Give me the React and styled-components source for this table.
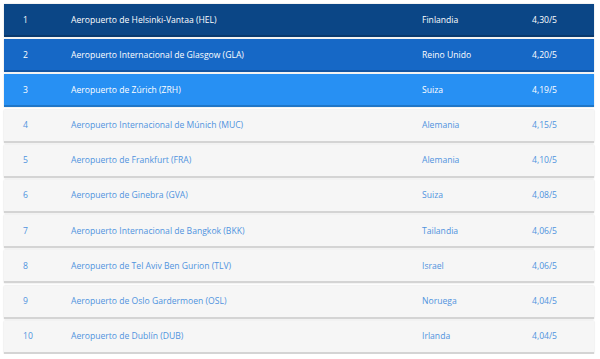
import React from "react";
import styled, { createGlobalStyle } from "styled-components";

const airports = [
  { rank: 1, name: "Aeropuerto de Helsinki-Vantaa (HEL)", country: "Finlandia", score: "4,30/5" },
  { rank: 2, name: "Aeropuerto Internacional de Glasgow (GLA)", country: "Reino Unido", score: "4,20/5" },
  { rank: 3, name: "Aeropuerto de Zúrich (ZRH)", country: "Suiza", score: "4,19/5" },
  { rank: 4, name: "Aeropuerto Internacional de Múnich (MUC)", country: "Alemania", score: "4,15/5" },
  { rank: 5, name: "Aeropuerto de Frankfurt (FRA)", country: "Alemania", score: "4,10/5" },
  { rank: 6, name: "Aeropuerto de Ginebra (GVA)", country: "Suiza", score: "4,08/5" },
  { rank: 7, name: "Aeropuerto Internacional de Bangkok (BKK)", country: "Tailandia", score: "4,06/5" },
  { rank: 8, name: "Aeropuerto de Tel Aviv Ben Gurion (TLV)", country: "Israel", score: "4,06/5" },
  { rank: 9, name: "Aeropuerto de Oslo Gardermoen (OSL)", country: "Noruega", score: "4,04/5" },
  { rank: 10, name: "Aeropuerto de Dublín (DUB)", country: "Irlanda", score: "4,04/5" },
];

const podium = {
  1: "#0b4686",
  2: "#1668c6",
  3: "#2790f3",
};

function App() {
  return (
    <>
      <GlobalStyle />
      <Table>
        {airports.map((item) => (
          <Row key={item.rank} $bg={podium[item.rank]}>
            <Rank>{item.rank}</Rank>
            <Name>{item.name}</Name>
            <Country>{item.country}</Country>
            <Score>{item.score}</Score>
          </Row>
        ))}
      </Table>
    </>
  );
}

const GlobalStyle = createGlobalStyle`
  body {
    margin: 0;
    background: #ffffff;
    font-family: "Open Sans", "Noto Sans", sans-serif;
  }
`;

const Table = styled.div`
  display: flex;
  flex-direction: column;
  gap: 2.2px;
  padding: 4px 6px 0 4px;
`;

const Row = styled.div`
  display: grid;
  grid-template-columns: 67px 351px 110px 1fr;
  align-items: center;
  height: 31px;
  border-bottom: 2px solid ${(p) => (p.$bg ? "rgba(0,0,0,0.18)" : "#d4d4d4")};
  box-shadow: 0 0 1.5px rgba(0, 0, 0, 0.18);
  background: ${(p) => p.$bg || "#f6f6f6"};
  color: ${(p) => (p.$bg ? "#ffffff" : "#4f93de")};
  font-size: 8.6px;
`;

const Rank = styled.div`
  padding-left: 19px;
`;

const Name = styled.div`
  white-space: nowrap;
`;

const Country = styled.div`
  white-space: nowrap;
`;

const Score = styled.div`
  white-space: nowrap;
`;

export default App;
